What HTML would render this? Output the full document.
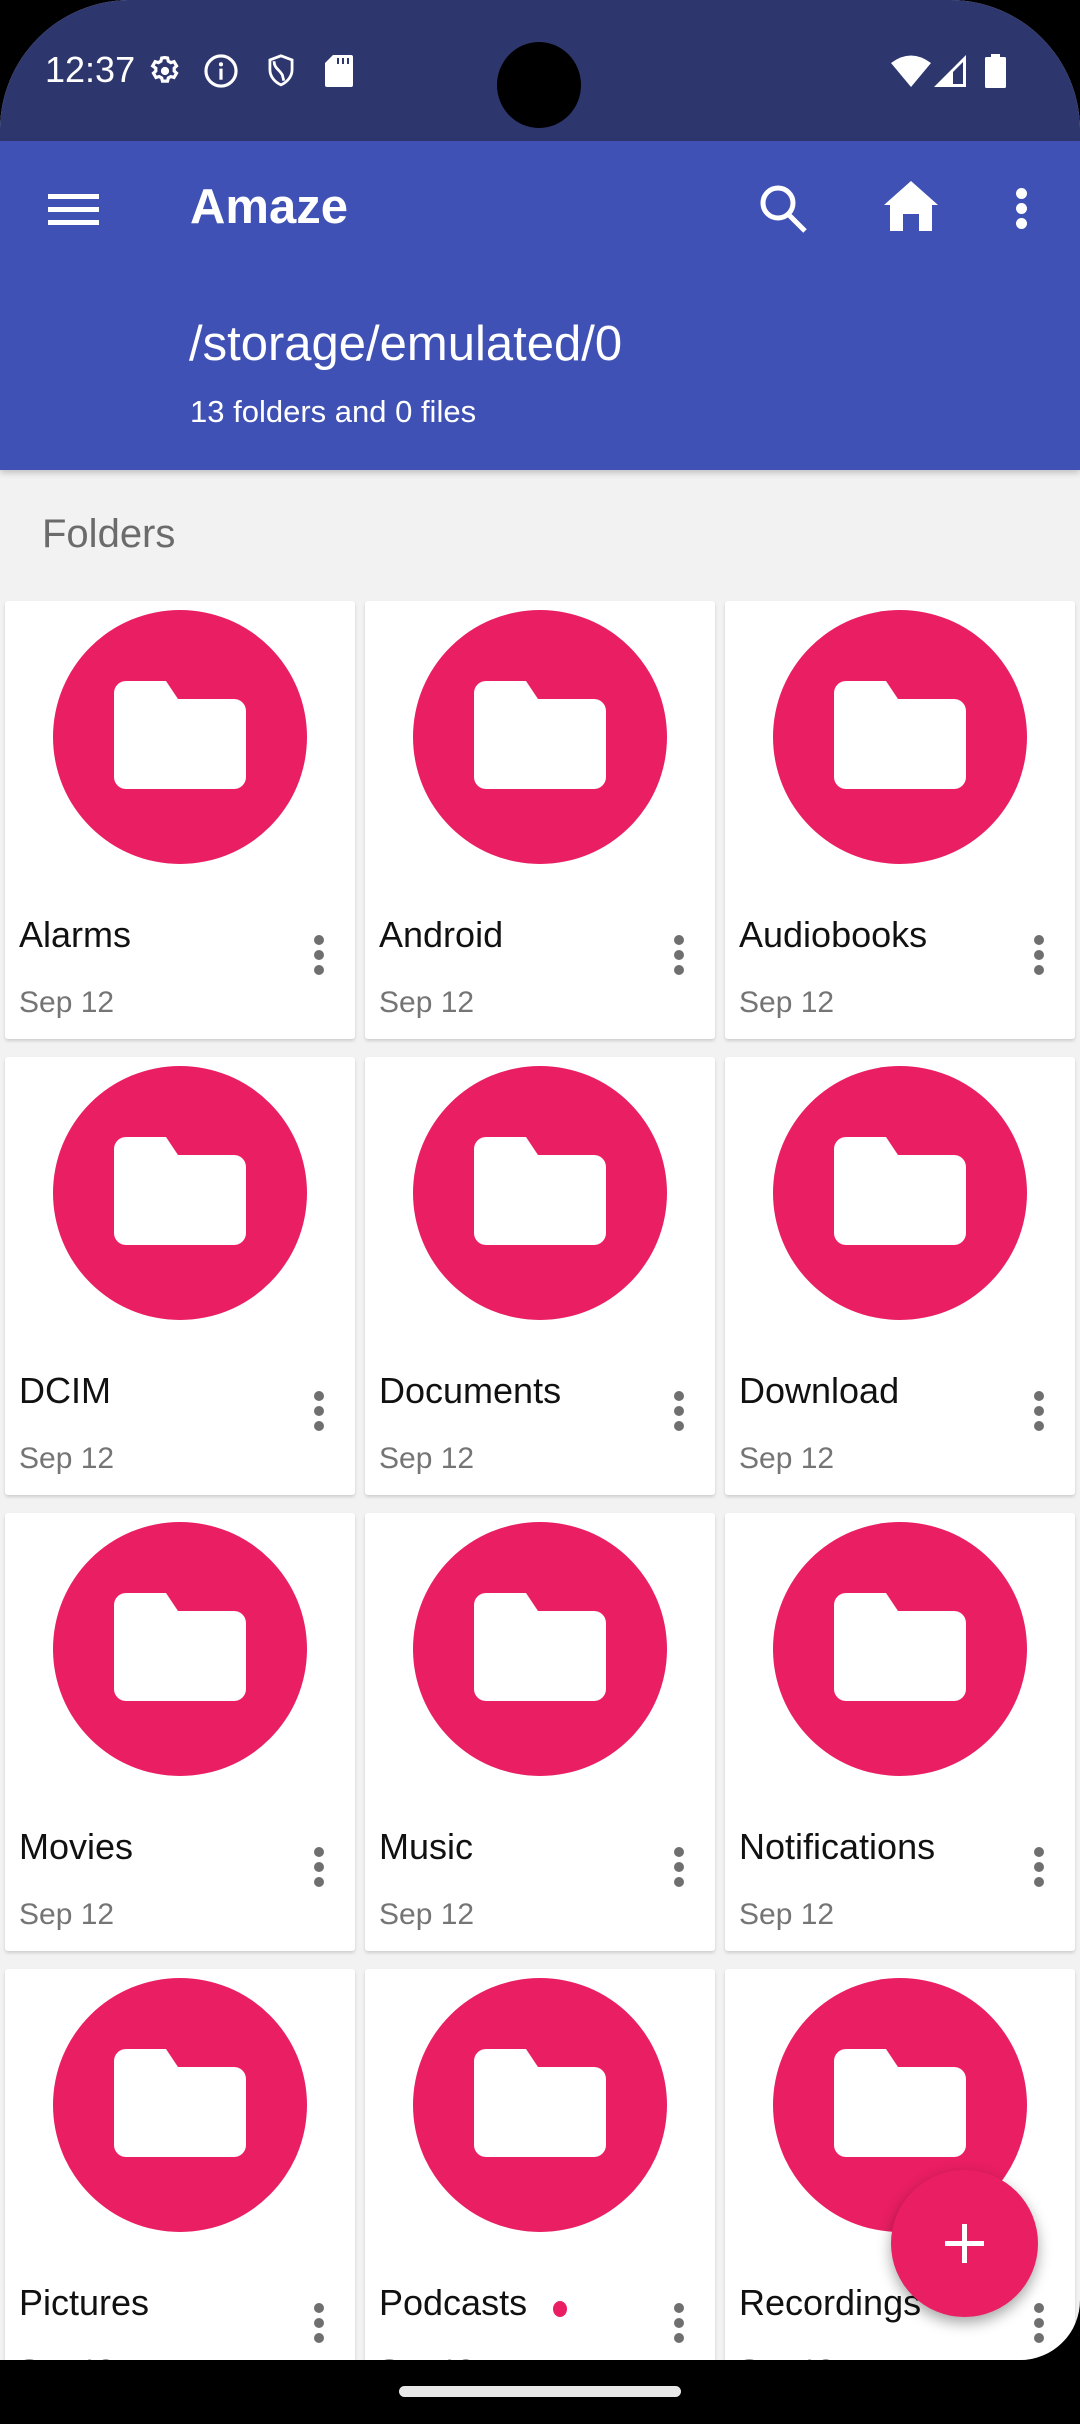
<!DOCTYPE html>
<html><head><meta charset="utf-8">
<style>
*{margin:0;padding:0;box-sizing:border-box}
html,body{width:1080px;height:2424px;background:#000;overflow:hidden;font-family:"Liberation Sans",Roboto,sans-serif}
#screen{position:absolute;left:0;top:0;width:1080px;height:2424px;background:#000}
#phone{position:absolute;left:0;top:0;width:1080px;height:2360px;background:#f2f2f2;border-radius:130px 130px 60px 0;overflow:hidden}
#status{position:absolute;left:0;top:0;width:1080px;height:141px;background:#2d366d}
#bar{position:absolute;left:0;top:141px;width:1080px;height:329px;background:#3f51b5;box-shadow:0 3px 6px rgba(0,0,0,.2)}
.t{position:absolute;white-space:nowrap;line-height:1}
.card{position:absolute;width:350px;height:438px;background:#fff;border-radius:3px;box-shadow:0 2px 3px rgba(0,0,0,.15)}
.circ{position:absolute;left:48px;top:9px;width:254px;height:254px;border-radius:50%;background:#e91e63}
.circ svg{position:absolute;left:61px;top:71px}
.name{position:absolute;left:14px;top:316px;font-size:36px;color:#111;line-height:1}
.date{position:absolute;left:14px;top:387px;font-size:30px;color:#757575;line-height:1}
.dots{position:absolute;left:309px;top:334px;width:10px}
.dots i{display:block;width:10px;height:10px;border-radius:50%;background:#6f6f6f;margin-bottom:5px}
</style></head><body>
<div id="screen">
<div id="phone">
<div id="status">
 <div class="t" style="left:45px;top:52px;font-size:36px;color:#fff">12:37</div>
 <svg style="position:absolute;left:146px;top:52px" width="38" height="38" viewBox="0 0 24 24"><path fill="none" stroke="#fff" stroke-width="2" d="M12 3.5l1.6.3.5 2 1.6.9 2-.6 1.6 2.7-1.5 1.4v1.8l1.5 1.4-1.6 2.7-2-.6-1.6.9-.5 2h-3.2l-.5-2-1.6-.9-2 .6-1.6-2.7 1.5-1.4v-1.8L4.2 8.8l1.6-2.7 2 .6 1.6-.9.5-2z"/><circle cx="12" cy="12" r="2.6" fill="#fff"/></svg>
 <svg style="position:absolute;left:202px;top:52px" width="38" height="38" viewBox="0 0 24 24"><circle cx="12" cy="12" r="9.5" fill="none" stroke="#fff" stroke-width="2"/><rect x="11" y="10.5" width="2" height="7" fill="#fff"/><circle cx="12" cy="7.8" r="1.3" fill="#fff"/></svg>
 <svg style="position:absolute;left:264px;top:53px" width="34" height="36" viewBox="0 0 24 26"><path fill="none" stroke="#fff" stroke-width="2" d="M12 2l8 3v7c0 5-3.5 9-8 11-4.5-2-8-6-8-11V5z"/><path fill="none" stroke="#fff" stroke-width="2" d="M7 6c0 5 4 6 6 10l1 4"/></svg>
 <svg style="position:absolute;left:325px;top:55px" width="28" height="32" viewBox="0 0 14 16"><path fill="#fff" d="M4 0h9a1 1 0 0 1 1 1v14a1 1 0 0 1-1 1H1a1 1 0 0 1-1-1V4z"/><rect x="6" y="1.5" width="1" height="3" fill="#2d366d"/><rect x="8.5" y="1.5" width="1" height="3" fill="#2d366d"/><rect x="11" y="1.5" width="1" height="3" fill="#2d366d"/></svg>
 <div style="position:absolute;left:497px;top:42px;width:84px;height:86px;border-radius:50%;background:#000"></div>
 <svg style="position:absolute;left:891px;top:54px" width="40" height="33" viewBox="0 0 40 33"><path fill="#fff" d="M0 9Q20-6 40 9L20 33z"/></svg>
 <svg style="position:absolute;left:934px;top:55px" width="33" height="33" viewBox="0 0 33 33"><path fill="#fff" d="M32 0v32H0zM29 7L19 17v12h10z"/></svg>
 <svg style="position:absolute;left:985px;top:54px" width="21" height="34" viewBox="0 0 21 34"><rect x="6" y="0" width="9" height="4" fill="#fff"/><rect x="0" y="3" width="21" height="31" rx="1.5" fill="#fff"/></svg>
</div>
<div id="bar">
 <div style="position:absolute;left:48px;top:53px;width:51px;height:5px;background:#fff"></div>
 <div style="position:absolute;left:48px;top:66px;width:51px;height:5px;background:#fff"></div>
 <div style="position:absolute;left:48px;top:79px;width:51px;height:5px;background:#fff"></div>
 <div class="t" style="left:190px;top:42px;font-size:49px;color:#fff;font-weight:bold">Amaze</div>
 <svg style="position:absolute;left:755px;top:40px" width="56" height="56" viewBox="0 0 56 56"><circle cx="23" cy="22" r="15" fill="none" stroke="#fff" stroke-width="5"/><path d="M33 33l17 17" stroke="#fff" stroke-width="5"/></svg>
 <svg style="position:absolute;left:884px;top:40px" width="54" height="50" viewBox="0 0 54 50"><path fill="#fff" d="M27 0l27 24h-6v26H35V33H19v17H6V24H0z"/></svg>
 <div style="position:absolute;left:1016px;top:47px;width:11px;height:11px;border-radius:50%;background:#fff"></div>
 <div style="position:absolute;left:1016px;top:62px;width:11px;height:11px;border-radius:50%;background:#fff"></div>
 <div style="position:absolute;left:1016px;top:77px;width:11px;height:11px;border-radius:50%;background:#fff"></div>
 <div class="t" style="left:189px;top:179px;font-size:49px;color:#fff">/storage/emulated/0</div>
 <div class="t" style="left:190px;top:255px;font-size:31px;color:#fff">13 folders and 0 files</div>
</div>
<div class="t" style="left:42px;top:514px;font-size:40px;color:#6b6b6b">Folders</div>

<div class="card" style="left:5px;top:601px"><div class="circ"><svg width="132" height="108" viewBox="0 0 132 108"><path fill="#fff" d="M12 0h40l12 18h56a12 12 0 0 1 12 12v66a12 12 0 0 1-12 12H12A12 12 0 0 1 0 96V12A12 12 0 0 1 12 0z"/></svg></div><div class="name">Alarms</div><div class="date">Sep 12</div><div class="dots"><i></i><i></i><i></i></div></div>
<div class="card" style="left:365px;top:601px"><div class="circ"><svg width="132" height="108" viewBox="0 0 132 108"><path fill="#fff" d="M12 0h40l12 18h56a12 12 0 0 1 12 12v66a12 12 0 0 1-12 12H12A12 12 0 0 1 0 96V12A12 12 0 0 1 12 0z"/></svg></div><div class="name">Android</div><div class="date">Sep 12</div><div class="dots"><i></i><i></i><i></i></div></div>
<div class="card" style="left:725px;top:601px"><div class="circ"><svg width="132" height="108" viewBox="0 0 132 108"><path fill="#fff" d="M12 0h40l12 18h56a12 12 0 0 1 12 12v66a12 12 0 0 1-12 12H12A12 12 0 0 1 0 96V12A12 12 0 0 1 12 0z"/></svg></div><div class="name">Audiobooks</div><div class="date">Sep 12</div><div class="dots"><i></i><i></i><i></i></div></div>

<div class="card" style="left:5px;top:1057px"><div class="circ"><svg width="132" height="108" viewBox="0 0 132 108"><path fill="#fff" d="M12 0h40l12 18h56a12 12 0 0 1 12 12v66a12 12 0 0 1-12 12H12A12 12 0 0 1 0 96V12A12 12 0 0 1 12 0z"/></svg></div><div class="name">DCIM</div><div class="date">Sep 12</div><div class="dots"><i></i><i></i><i></i></div></div>
<div class="card" style="left:365px;top:1057px"><div class="circ"><svg width="132" height="108" viewBox="0 0 132 108"><path fill="#fff" d="M12 0h40l12 18h56a12 12 0 0 1 12 12v66a12 12 0 0 1-12 12H12A12 12 0 0 1 0 96V12A12 12 0 0 1 12 0z"/></svg></div><div class="name">Documents</div><div class="date">Sep 12</div><div class="dots"><i></i><i></i><i></i></div></div>
<div class="card" style="left:725px;top:1057px"><div class="circ"><svg width="132" height="108" viewBox="0 0 132 108"><path fill="#fff" d="M12 0h40l12 18h56a12 12 0 0 1 12 12v66a12 12 0 0 1-12 12H12A12 12 0 0 1 0 96V12A12 12 0 0 1 12 0z"/></svg></div><div class="name">Download</div><div class="date">Sep 12</div><div class="dots"><i></i><i></i><i></i></div></div>

<div class="card" style="left:5px;top:1513px"><div class="circ"><svg width="132" height="108" viewBox="0 0 132 108"><path fill="#fff" d="M12 0h40l12 18h56a12 12 0 0 1 12 12v66a12 12 0 0 1-12 12H12A12 12 0 0 1 0 96V12A12 12 0 0 1 12 0z"/></svg></div><div class="name">Movies</div><div class="date">Sep 12</div><div class="dots"><i></i><i></i><i></i></div></div>
<div class="card" style="left:365px;top:1513px"><div class="circ"><svg width="132" height="108" viewBox="0 0 132 108"><path fill="#fff" d="M12 0h40l12 18h56a12 12 0 0 1 12 12v66a12 12 0 0 1-12 12H12A12 12 0 0 1 0 96V12A12 12 0 0 1 12 0z"/></svg></div><div class="name">Music</div><div class="date">Sep 12</div><div class="dots"><i></i><i></i><i></i></div></div>
<div class="card" style="left:725px;top:1513px"><div class="circ"><svg width="132" height="108" viewBox="0 0 132 108"><path fill="#fff" d="M12 0h40l12 18h56a12 12 0 0 1 12 12v66a12 12 0 0 1-12 12H12A12 12 0 0 1 0 96V12A12 12 0 0 1 12 0z"/></svg></div><div class="name">Notifications</div><div class="date">Sep 12</div><div class="dots"><i></i><i></i><i></i></div></div>

<div class="card" style="left:5px;top:1969px"><div class="circ"><svg width="132" height="108" viewBox="0 0 132 108"><path fill="#fff" d="M12 0h40l12 18h56a12 12 0 0 1 12 12v66a12 12 0 0 1-12 12H12A12 12 0 0 1 0 96V12A12 12 0 0 1 12 0z"/></svg></div><div class="name">Pictures</div><div class="date">Sep 12</div><div class="dots"><i></i><i></i><i></i></div></div>
<div class="card" style="left:365px;top:1969px"><div class="circ"><svg width="132" height="108" viewBox="0 0 132 108"><path fill="#fff" d="M12 0h40l12 18h56a12 12 0 0 1 12 12v66a12 12 0 0 1-12 12H12A12 12 0 0 1 0 96V12A12 12 0 0 1 12 0z"/></svg></div><div class="name">Podcasts</div><div class="date">Sep 12</div><div class="dots"><i></i><i></i><i></i></div><div style="position:absolute;left:188px;top:332px;width:14px;height:16px;border-radius:50%;background:#e91e63"></div></div>
<div class="card" style="left:725px;top:1969px"><div class="circ"><svg width="132" height="108" viewBox="0 0 132 108"><path fill="#fff" d="M12 0h40l12 18h56a12 12 0 0 1 12 12v66a12 12 0 0 1-12 12H12A12 12 0 0 1 0 96V12A12 12 0 0 1 12 0z"/></svg></div><div class="name">Recordings</div><div class="date">Sep 12</div><div class="dots"><i></i><i></i><i></i></div></div>

<div style="position:absolute;left:891px;top:2170px;width:147px;height:147px;border-radius:50%;background:#e91e63;box-shadow:0 6px 14px rgba(0,0,0,.35)">
 <div style="position:absolute;left:54px;top:71px;width:39px;height:5px;background:#fff"></div>
 <div style="position:absolute;left:71px;top:54px;width:5px;height:39px;background:#fff"></div>
</div>
</div>
<div style="position:absolute;left:399px;top:2386px;width:282px;height:11px;border-radius:6px;background:#e8e8e8"></div>
</div>
</body></html>
